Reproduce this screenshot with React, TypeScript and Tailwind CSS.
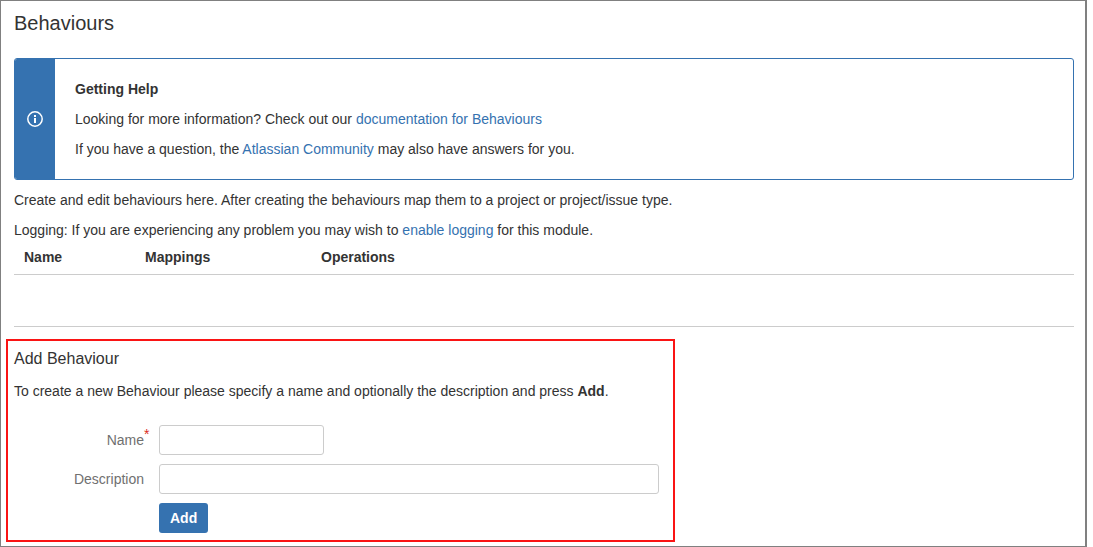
import React from "react";

const linkClass = "text-[#3572b0] hover:underline";
const inputClass =
  "h-[30px] rounded-[3px] border border-[#cccccc] bg-white px-1 text-sm text-[#333333] outline-none focus:border-[#3572b0]";
const labelClass = "w-[145px] shrink-0 pr-[15px] text-right text-[#707070]";

function InfoIcon() {
  return (
    <svg width="16" height="16" viewBox="0 0 16 16" fill="none" aria-hidden="true">
      <circle cx="8" cy="8" r="7.2" stroke="#ffffff" strokeWidth="1.5" />
      <rect x="7" y="4" width="2" height="2" fill="#ffffff" />
      <rect x="7" y="7" width="2" height="5" fill="#ffffff" />
    </svg>
  );
}

function HelpMessage() {
  return (
    <section className="mt-5 flex overflow-hidden rounded-[3px] border border-[#3572b0]">
      <div className="flex w-10 shrink-0 items-center justify-center bg-[#3572b0]">
        <InfoIcon />
      </div>
      <div className="flex flex-col gap-2.5 p-5">
        <h2 className="font-bold">Getting Help</h2>
        <p>
          Looking for more information? Check out our{" "}
          <a href="#documentation" className={linkClass}>documentation for Behaviours</a>
        </p>
        <p>
          If you have a question, the{" "}
          <a href="#community" className={linkClass}>Atlassian Community</a> may also have answers for you.
        </p>
      </div>
    </section>
  );
}

function BehavioursTable() {
  return (
    <table className="w-full table-fixed border-collapse text-left">
      <thead>
        <tr className="border-b border-[#cccccc]">
          <th className="w-[121px] px-2.5 py-[7px]">Name</th>
          <th className="w-[176px] px-2.5 py-[7px]">Mappings</th>
          <th className="px-2.5 py-[7px]">Operations</th>
        </tr>
      </thead>
      <tbody>
        <tr className="border-b border-[#cccccc]">
          <td colSpan={3} className="h-[52px]" />
        </tr>
      </tbody>
    </table>
  );
}

function AddBehaviour() {
  return (
    <section className="mt-3 -ml-2 w-[669px] max-w-full border-2 border-[#fa1414] px-1.5 pt-2 pb-[7px]">
      <h2 className="text-base leading-5">Add Behaviour</h2>
      <p className="mt-3">
        To create a new Behaviour please specify a name and optionally the description and press{" "}
        <strong>Add</strong>.
      </p>
      <form className="mt-6 flex flex-col gap-[9px]" onSubmit={(e) => e.preventDefault()}>
        <div className="flex items-center">
          <label htmlFor="name" className={labelClass}>
            <span className="relative">
              Name
              <span className="absolute -top-1.5 left-full text-sm leading-4 text-[#d92b20]">*</span>
            </span>
          </label>
          <input id="name" type="text" required className={`${inputClass} w-[165px]`} />
        </div>
        <div className="flex items-center">
          <label htmlFor="description" className={labelClass}>Description</label>
          <input id="description" type="text" className={`${inputClass} w-[500px] min-w-0`} />
        </div>
        <button
          type="submit"
          className="ml-[145px] h-[30px] self-start rounded-[3px] bg-[#3572b0] px-[11px] font-bold text-white"
        >
          Add
        </button>
      </form>
    </section>
  );
}

export default function App() {
  return (
    <main className="mr-1.5 border border-r-2 border-[#808080] bg-white pt-2 pr-[11px] pb-1 pl-[13px] font-['Liberation_Sans',Arial,sans-serif] text-sm leading-5 text-[#333333]">
      <h1 className="text-xl leading-[29px]">Behaviours</h1>
      <HelpMessage />
      <p className="mt-2.5">
        Create and edit behaviours here. After creating the behaviours map them to a project or project/issue type.
      </p>
      <p className="mt-2.5">
        Logging: If you are experiencing any problem you may wish to{" "}
        <a href="#logging" className={linkClass}>enable logging</a> for this module.
      </p>
      <BehavioursTable />
      <AddBehaviour />
    </main>
  );
}
